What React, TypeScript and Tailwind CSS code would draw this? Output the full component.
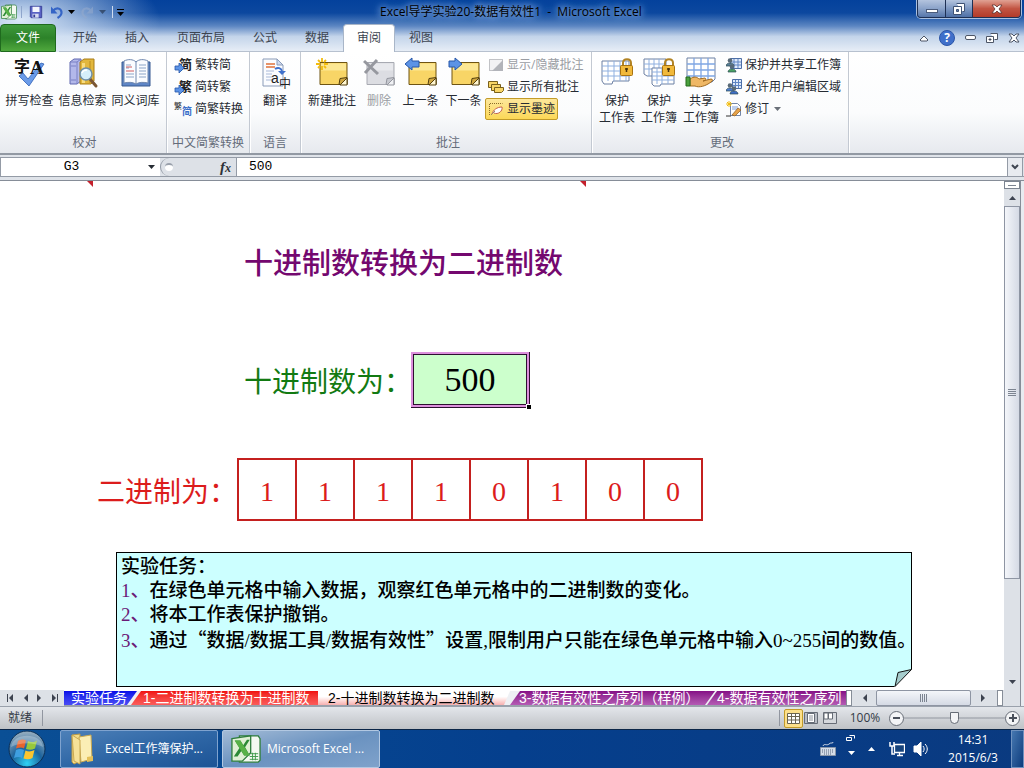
import type { ReactNode } from "react";

const UI_FONT = "font-['Open_Sans','Noto_Sans_CJK_SC',sans-serif]";
const SONG_FONT = "font-['Liberation_Serif','Noto_Sans_CJK_SC',serif]";

/* ---------- small drawings ---------- */

function ExcelLogo({ className }: { className: string }) {
  return (
    <svg viewBox="0 0 32 32" className={className}>
      <path d="M9 2h20l2 3v23l-2 2H9z" fill="#f4f9f1" stroke="#2e7d3c" strokeWidth="1.4" />
      <path d="M20 21h9M20 24h9M20 27h9M23 20v8M26 20v8" stroke="#3f9a4b" strokeWidth="1" />
      <path d="M1 5l20-3v18l-9 9H1z" fill="#dff0d4" stroke="#2e7d3c" strokeWidth="1.4" />
      <path d="M4 7h6l3 5 4-6h3l-5 8 5 9h-6l-3-5-4 6H3l6-9z" fill="#2c8a36" />
      <path d="M4 7h6l10 16h-6z" fill="#57b146" />
    </svg>
  );
}

function SaveIcon() {
  return (
    <svg viewBox="0 0 16 16" className="size-3.5">
      <path d="M1.500 1.500h13v13h-12l-1-1z" fill="#5a62c4" stroke="#343b94" />
      <rect x="4" y="2" width="8" height="6" fill="#f3f5fd" />
      <rect x="4" y="10" width="7" height="4.500" fill="#d5daf0" />
      <rect x="5" y="11" width="2" height="3" fill="#343b94" />
    </svg>
  );
}

function UndoIcon({ redo = false }: { redo?: boolean }) {
  return (
    <svg viewBox="0 0 16 16" className="size-4">
      <g transform={redo ? "translate(16 0) scale(-1 1)" : undefined}>
        <path
          d="M4 7c3-4 8-3 8.500 1 .3 2.500-1.500 4.500-4 6"
          fill="none"
          stroke={redo ? "#93a9cc" : "#3565c6"}
          strokeWidth="2.200"
        />
        <path d="M2 2.500v7h6.500z" fill={redo ? "#93a9cc" : "#3565c6"} />
      </g>
    </svg>
  );
}

function SpellIcon() {
  return (
    <svg viewBox="0 0 32 32" className="size-8 overflow-visible">
      <path d="M5 19l4-3 5 6L27 6l3 1-15 22z" fill="#6b9be8" stroke="#2f5fb5" strokeWidth="0.800" />
      <text x="0" y="15" fontSize="16" fontWeight="700" fontFamily="Noto Sans CJK SC" fill="#111">字</text>
      <text x="16" y="17" fontSize="19" fontWeight="700" fontFamily="Liberation Serif" fill="#111">A</text>
    </svg>
  );
}

function ResearchIcon() {
  return (
    <svg viewBox="0 0 32 32" className="size-8">
      <path d="M3 5l4-3h7v22l-4 3H3z" fill="#b3b8ea" stroke="#6068b0" />
      <path d="M3 5h7v22M10 5l4-3M4 9h5M4 23h5" fill="none" stroke="#7a80c4" />
      <path d="M13 5l4-3h10v22l-3 3H13z" fill="#e2b73d" stroke="#a87c18" />
      <path d="M15 6h3v20h-3z" fill="#f8dc80" />
      <path d="M23 4v22" stroke="#b88b20" />
      <path d="M23 22l6 7" stroke="#7b5735" strokeWidth="3" strokeLinecap="round" />
      <circle cx="19" cy="17" r="6" fill="#d6effa" stroke="#6f8ea6" strokeWidth="1.500" />
      <path d="M15 16c1-3 4-3 5-3" fill="none" stroke="#fff" strokeWidth="1.500" />
    </svg>
  );
}

function ThesaurusIcon() {
  return (
    <svg viewBox="0 0 32 32" className="size-8">
      <path d="M2 5h28v24H2z" fill="#5f86c7" stroke="#36588f" />
      <path d="M4 4c4-2 9-2 12 1 3-3 8-3 12-1v22c-4-1-9-1-12 1-3-2-8-2-12-1z" fill="#fbfcff" stroke="#6f87ae" />
      <path d="M16 5v22" stroke="#6f87ae" />
      <path d="M6 8h5M6 11h3M6 17h8M6 20h8M19 8h7M19 11h7M19 14h7M19 17h7M19 20h7" stroke="#8ca3c8" strokeWidth="1.200" />
      <path d="M6 10h6M6 14h8" stroke="#cf5a60" strokeWidth="1.200" />
    </svg>
  );
}

function TranslateIcon() {
  return (
    <svg viewBox="0 0 32 32" className="size-8 overflow-visible">
      <path d="M4 2h14l6 6v21H4z" fill="#fbfcff" stroke="#8a9bb8" />
      <path d="M18 2v6h6z" fill="#cfdaf0" stroke="#8a9bb8" />
      <path d="M7 7h9M7 10h9" stroke="#e0703a" strokeWidth="1.500" />
      <path d="M7 14h8M7 17h6M7 20h6M7 23h6" stroke="#a9b9d8" />
      <path d="M16 12c3-2 6-1 7 2" fill="none" stroke="#3f70cc" strokeWidth="2" />
      <path d="M19 14h8l-4 4z" fill="#3f70cc" />
      <text x="12" y="26" fontSize="14" fontFamily="Liberation Sans" fill="#222">a</text>
      <text x="20" y="31" fontSize="12" fontFamily="Noto Sans CJK SC" fill="#222">中</text>
    </svg>
  );
}

type NoteKind = "new" | "delete" | "prev" | "next";

function NoteIcon({ kind }: { kind: NoteKind }) {
  const off = kind === "delete";
  return (
    <svg viewBox="0 0 32 32" className="size-8">
      <path d="M4 5.500h27v22H4z" fill={off ? "#dcdde2" : "#f8d566"} stroke={off ? "#a8aab2" : "#6e5413"} />
      <path d="M5 6.500h25v7H5z" fill={off ? "#e8e9ed" : "#fce793"} />
      <path d="M31 20.500l-7 1-1 6h8z" fill={off ? "#c6c8cf" : "#cfa640"} stroke={off ? "#94969e" : "#54400f"} />
      <path d="M31 21v7h-7z" fill={off ? "#f0f1f4" : "#fff6d0"} stroke={off ? "#94969e" : "#54400f"} />
      {kind === "new" && (
        <path
          d="M6 1v4M6 9v4M0 7h4M8 7h4M2 3l2 2M10 3L8 5M2 11l2-2M10 11L8 9"
          stroke="#f2bc10"
          strokeWidth="1.800"
        />
      )}
      {kind === "delete" && <path d="M1 4l14 13M14 3L2 16" stroke="#96989f" strokeWidth="3" />}
      {kind === "prev" && <path d="M0 7l7-6v3h7v6H7v3z" fill="#5c93e6" stroke="#2657a8" />}
      {kind === "next" && <path d="M14 7L7 1v3H1v6h6v3z" fill="#5c93e6" stroke="#2657a8" />}
    </svg>
  );
}

function Lock() {
  return (
    <>
      <path d="M22 10V6c0-5 8-5 8 0v4" fill="none" stroke="#b18324" strokeWidth="2" />
      <rect x="19.500" y="8.500" width="12" height="10" rx="1" fill="#f1b93b" stroke="#a87312" />
      <path d="M25.500 11v4M24 12h3" stroke="#4a3208" strokeWidth="1.500" />
    </>
  );
}

function ProtectSheetIcon() {
  return (
    <svg viewBox="0 0 32 32" className="size-8">
      <path d="M1 4h27v20H12l-1 3H3l-2-3z" fill="#fff" stroke="#6d80a3" />
      <path d="M1 9h27M1 14h27M1 19h27M7 4v20M13 4v20M19 4v20M25 4v20" stroke="#8fb0e0" />
      <Lock />
    </svg>
  );
}

function ProtectBookIcon() {
  return (
    <svg viewBox="0 0 32 32" className="size-8">
      <path d="M1 2h22v17H4l-3-2z" fill="#fff" stroke="#6d80a3" />
      <path d="M1 7h22M1 12h22M6 2v17M11 2v17M16 2v17" stroke="#8fb0e0" />
      <path d="M9 11h22v16H18l-1 2h-6l-2-2z" fill="#fff" stroke="#6d80a3" />
      <path d="M9 15h22M9 19h22M9 23h22M14 11v16M19 11v16M25 11v16" stroke="#8fb0e0" />
      <Lock />
    </svg>
  );
}

function ShareBookIcon() {
  return (
    <svg viewBox="0 0 32 32" className="size-8">
      <path d="M2 1h28v21l-3 3H2z" fill="#fff" stroke="#6d80a3" />
      <path d="M2 7h28M2 13h28M2 19h28M9 1v23M16 1v23M23 1v23" stroke="#7fa6e4" strokeWidth="1.300" />
      <path d="M5 22c4-3 7-2 9 0l6-1c2 1 0 3-2 3l8-2c2 0 2 2 0 3-5 4-12 6-16 4H5z" fill="#efb765" stroke="#a06a20" />
      <path d="M1 20h4v9H1z" fill="#4aa13e" stroke="#256b1d" />
    </svg>
  );
}

function ConvertIcon({ from, to }: { from: string; to?: string }) {
  return (
    <svg viewBox="0 0 16 16" className="size-4 overflow-visible">
      {to ? (
        <>
          <text x="-2" y="8" fontSize="8" fontFamily="Noto Sans CJK SC" fill="#222">{from}</text>
          <text x="6" y="14" fontSize="10" fontWeight="700" fontFamily="Noto Sans CJK SC" fill="#3a6fc9">{to}</text>
        </>
      ) : (
        <>
          <text x="3" y="12" fontSize="13" fontWeight="700" fontFamily="Noto Sans CJK SC" fill="#222">{from}</text>
          <path d="M-1 9h4V6l5 5-5 5v-3h-4z" fill="#5c93e6" stroke="#2657a8" strokeWidth="0.800" />
        </>
      )}
    </svg>
  );
}

function ShowHideIcon() {
  return (
    <svg viewBox="0 0 16 16" className="size-4">
      <path d="M1.500 2.500h13v11h-13z" fill="#f2f2f4" stroke="#8b8d93" strokeDasharray="1 1" />
      <path d="M15 3v11H4z" fill="#b2b4ba" />
    </svg>
  );
}

function ShowAllIcon() {
  return (
    <svg viewBox="0 0 16 16" className="size-4" fill="#f8d566" stroke="#79601c">
      <path d="M.5 2.500h9v6h-9z" />
      <path d="M3.500 5.500h9v6h-9z" />
      <path d="M6.500 8.500h9v3l-2 2h-7z" />
    </svg>
  );
}

function InkIcon() {
  return (
    <svg viewBox="0 0 16 16" className="size-4">
      <path d="M1.500 14V2.500h13" fill="none" stroke="#8a6d2a" strokeDasharray="1 1" />
      <path d="M4 13c1-4 5-7 10-7 1 4-4 8-8 6" fill="#fff" stroke="#c4604c" />
      <path d="M3 14l4-4" stroke="#9a8a6a" />
    </svg>
  );
}

function Person({ x, y, color }: { x: number; y: number; color: string }) {
  return (
    <g transform={`translate(${x} ${y})`}>
      <path d="M0 8c0-4 8-4 8 0z" fill={color} stroke="#2c4a55" strokeWidth="0.700" />
      <circle cx="4" cy="2.500" r="2.300" fill="#596a78" />
    </g>
  );
}

function GridPeopleIcon({ pair = false }: { pair?: boolean }) {
  return (
    <svg viewBox="0 0 16 16" className="size-4">
      <path d={pair ? "M6.500.5h9v9h-9z" : "M4.500 1.500h11v10h-11z"} fill="#dfeafa" stroke="#4d6fa6" />
      <path
        d={pair ? "M7 3.500h8M7 6.500h8M9.500 1v8M12.500 1v8" : "M5 5h10M5 8h10M8 2v9M12 2v9"}
        stroke="#5e85c4"
      />
      {pair ? <Person x={0} y={4} color="#4e7ed0" /> : <Person x={0} y={1} color="#5a7f96" />}
      <Person x={pair ? 4 : 2} y={7} color={pair ? "#3f6fc8" : "#49a263"} />
    </svg>
  );
}

function TrackIcon() {
  return (
    <svg viewBox="0 0 16 16" className="size-4">
      <path d="M4.500 2.500h7l3 3v9h-10z" fill="#fff" stroke="#7286a8" />
      <path d="M6 6h6M6 8h6" stroke="#7ea0d8" />
      <path d="M6 14l6-7 3 2-6 6z" fill="#e7a34a" stroke="#8d5a1b" strokeWidth="0.700" />
      <path d="M3 0v6M0 3h6M1 1l4 4M5 1L1 5" stroke="#f2bc10" />
      <path d="M0 15h5" stroke="#333" />
    </svg>
  );
}

function Caret({ className = "" }: { className?: string }) {
  return (
    <svg viewBox="0 0 7 4" className={`h-1 w-[7px] ${className}`}>
      <path d="M0 0h7L3.500 4z" fill="currentColor" />
    </svg>
  );
}

function SideArrow({ left = false, bar = false }: { left?: boolean; bar?: boolean }) {
  return (
    <svg viewBox="0 0 8 8" className="size-2" fill="#3d4350">
      <g transform={left ? "translate(8 0) scale(-1 1)" : undefined}>
        <path d="M1 0l4 4-4 4z" />
        {bar && <path d="M6 0h1v8H6z" />}
      </g>
    </svg>
  );
}

/* ---------- title bar and ribbon ---------- */

function TitleBar() {
  return (
    <header className="flex h-6 items-start">
      <div className="flex h-6 flex-1 items-center pl-px text-black">
        <ExcelLogo className="size-4" />
        <span className="mx-1 h-3 w-px bg-[#8fa6cc]" />
        <button aria-label="保存" className="ml-[3px]"><SaveIcon /></button>
        <button aria-label="撤销" className="ml-1.5"><UndoIcon /></button>
        <Caret className="ml-[3px]" />
        <button aria-label="恢复" className="ml-1 opacity-60"><UndoIcon redo /></button>
        <Caret className="ml-1 opacity-40" />
        <span className="ml-1.5 h-3 w-px bg-[#cfdcf0]" />
        <button aria-label="自定义快速访问工具栏" className="ml-1 border-t border-black pt-0.5"><Caret /></button>
      </div>
      <h1 className="h-6 text-[12px] leading-6 whitespace-pre text-black [text-shadow:0_0_6px_#a9c8f4,0_0_10px_#a9c8f4]">
        Excel导学实验20-数据有效性1  -  Microsoft Excel
      </h1>
      <div className="flex flex-1 justify-end pr-[3px]">
        <div className="flex h-[18px] overflow-hidden rounded-b border border-t-0 border-[#1e3054] shadow-[0_0_0_1px_#a9bfdf]">
          <button aria-label="最小化" className="flex w-7 items-center justify-center border-r border-[#1e3054] bg-linear-to-b from-[#b4c4de] via-[#8ba3c9] via-50% to-[#5676aa]">
            <span className="mt-1 h-1 w-3 border border-[#4b5c7c] bg-white" />
          </button>
          <button aria-label="还原" className="flex w-[27px] items-center justify-center border-r border-[#1e3054] bg-linear-to-b from-[#b4c4de] via-[#7e98c2] via-50% to-[#4f70a6]">
            <svg viewBox="0 0 12 12" className="size-3">
              <path d="M3.500.5h8v8h-2M.5 3.500h8v8h-8z" fill="#fff" stroke="#3f5274" />
              <path d="M3.500 6.500h2v2h-2z" fill="#6682b2" stroke="#3f5274" />
            </svg>
          </button>
          <button aria-label="关闭" className="flex w-[47px] items-center justify-center bg-linear-to-b from-[#e0a294] via-[#c25543] via-50% to-[#b33a28]">
            <svg viewBox="0 0 12 10" className="h-2.5 w-3">
              <path d="M1 1h3l2 2 2-2h3L8 5l3 4H8L6 7 4 9H1l3-4z" fill="#fff" stroke="#5b3330" strokeWidth="0.800" />
            </svg>
          </button>
        </div>
      </div>
    </header>
  );
}

const ribbonTabs = ["开始", "插入", "页面布局", "公式", "数据", "审阅", "视图"];

function RibbonTabs() {
  return (
    <nav className="flex h-7 items-stretch text-[12px] text-[#3c4450]">
      <button className="mr-[3px] w-14 rounded-t border border-[#1f6a1e] bg-linear-to-b from-[#3f9a3c] via-[#2c8229] to-[#4fa83d] text-white">
        文件
      </button>
      {ribbonTabs.map((tab) => (
        <button
          key={tab}
          className={
            tab === "审阅"
              ? "rounded-t border border-b-0 border-[#a9b6c8] bg-white px-[13px] pb-0.5"
              : "border-b border-[#b7c1cf] px-3.5"
          }
        >
          {tab}
        </button>
      ))}
      <div className="flex flex-1 items-center justify-end gap-2.5 border-b border-[#b7c1cf] pr-1 text-[#4c5566]">
        <button aria-label="功能区最小化">
          <svg viewBox="0 0 10 8" className="h-2 w-2.5">
            <path d="M1 6l4-4 4 4-1 1H2z" fill="#fff" stroke="currentColor" />
          </svg>
        </button>
        <button aria-label="帮助" className="size-4 rounded-full border border-[#2b55a8] bg-[#3f6fca] text-[12px] leading-3.5 font-bold text-white">
          ?
        </button>
        <button aria-label="最小化窗口" className="h-[5px] w-[11px] rounded-xs border border-current bg-white" />
        <button aria-label="还原窗口">
          <svg viewBox="0 0 12 12" className="size-3">
            <path d="M4.500 1.500h7v6h-3M.5 4.500h7v6h-7z" fill="#fff" stroke="currentColor" />
            <path d="M3 7h2v1H3z" stroke="currentColor" />
          </svg>
        </button>
        <button aria-label="关闭窗口">
          <svg viewBox="0 0 12 10" className="h-2.5 w-3">
            <path d="M1 1h3l2 2 2-2h3L8 5l3 4H8L6 7 4 9H1l3-4z" fill="#fff" stroke="currentColor" />
          </svg>
        </button>
      </div>
    </nav>
  );
}

function Group({ title, className = "", children }: { title: string; className?: string; children: ReactNode }) {
  return (
    <section className={`flex shrink-0 flex-col border-r border-[#c3c9d2] shadow-[1px_0_0_#fff] ${className}`}>
      <div className="flex flex-1">{children}</div>
      <h2 className="h-5 text-center leading-5 text-[#646c7a]">{title}</h2>
    </section>
  );
}

function BigButton({ icon, className, disabled, children }: { icon: ReactNode; className: string; disabled?: boolean; children: ReactNode }) {
  return (
    <button
      disabled={disabled}
      className={`flex flex-col items-center pt-[5px] leading-[17px] whitespace-nowrap disabled:text-[#9a9da3] ${className}`}
    >
      {icon}
      <span className="mt-[3px]">{children}</span>
    </button>
  );
}

function SmallButton({ icon, active, disabled, children }: { icon: ReactNode; active?: boolean; disabled?: boolean; children: ReactNode }) {
  return (
    <button
      disabled={disabled}
      className={`flex h-[22px] items-center gap-[3px] rounded-xs border px-0.5 whitespace-nowrap disabled:text-[#9a9da3] ${
        active ? "border-[#c29b29] bg-linear-to-b from-[#fde79a] to-[#fcd855]" : "border-transparent"
      }`}
    >
      {icon}
      {children}
    </button>
  );
}

function Ribbon() {
  return (
    <div className="flex h-[103px] border-b-2 border-[#9299a3] bg-linear-to-b from-white via-[#fbfcfd] via-60% to-[#e6e9ee] text-[12px] text-[#262b33]">
      <Group title="校对" className="w-[167px] pl-[3px]">
        <BigButton className="w-[53px]" icon={<SpellIcon />}>拼写检查</BigButton>
        <BigButton className="w-[53px]" icon={<ResearchIcon />}>信息检索</BigButton>
        <BigButton className="w-[53px]" icon={<ThesaurusIcon />}>同义词库</BigButton>
      </Group>
      <Group title="中文简繁转换" className="w-[83px]">
        <div className="flex flex-col items-start pt-0.5 pl-1.5">
          <SmallButton icon={<ConvertIcon from="简" />}>繁转简</SmallButton>
          <SmallButton icon={<ConvertIcon from="繁" />}>简转繁</SmallButton>
          <SmallButton icon={<ConvertIcon from="繁" to="简" />}>简繁转换</SmallButton>
        </div>
      </Group>
      <Group title="语言" className="w-[51px]">
        <BigButton className="w-full" icon={<TranslateIcon />}>翻译</BigButton>
      </Group>
      <Group title="批注" className="w-[291px] pl-1">
        <BigButton className="w-[54px]" icon={<NoteIcon kind="new" />}>新建批注</BigButton>
        <BigButton className="w-10" disabled icon={<NoteIcon kind="delete" />}>删除</BigButton>
        <BigButton className="w-[43px]" icon={<NoteIcon kind="prev" />}>上一条</BigButton>
        <BigButton className="w-[43px]" icon={<NoteIcon kind="next" />}>下一条</BigButton>
        <div className="flex flex-col items-start pt-0.5">
          <SmallButton disabled icon={<ShowHideIcon />}>显示/隐藏批注</SmallButton>
          <SmallButton icon={<ShowAllIcon />}>显示所有批注</SmallButton>
          <SmallButton active icon={<InkIcon />}>显示墨迹</SmallButton>
        </div>
      </Group>
      <Group title="更改" className="w-[257px] pl-1">
        <BigButton className="w-[42px]" icon={<ProtectSheetIcon />}>保护<br />工作表</BigButton>
        <BigButton className="w-[42px]" icon={<ProtectBookIcon />}>保护<br />工作簿</BigButton>
        <BigButton className="w-[42px]" icon={<ShareBookIcon />}>共享<br />工作簿</BigButton>
        <div className="flex flex-col items-start pt-0.5 pl-px">
          <SmallButton icon={<GridPeopleIcon />}>保护并共享工作簿</SmallButton>
          <SmallButton icon={<GridPeopleIcon pair />}>允许用户编辑区域</SmallButton>
          <SmallButton icon={<TrackIcon />}>修订<Caret className="ml-0.5 text-[#6a7079]" /></SmallButton>
        </div>
      </Group>
    </div>
  );
}

function FormulaBar() {
  return (
    <div className="border-b border-[#868d98] bg-[#dfe3e9] pt-0.5 pb-[3px]">
      <div className="flex h-5 items-stretch border-y border-[#949ba6] bg-[#dfe3e9] font-['Liberation_Mono',monospace] text-[13px] text-black">
        <input
          aria-label="名称框"
          defaultValue="G3"
          className="w-[142px] border-l border-[#949ba6] bg-white text-center outline-none"
        />
        <button aria-label="名称框下拉" className="flex w-[18px] items-center justify-center bg-white text-[#262b33]">
          <Caret />
        </button>
        <div className="flex w-[77px] items-center justify-between rounded-l-full border-x border-[#949ba6] bg-[#dde1e7] pr-[5px] pl-1">
          <span className="size-2 rounded-full border-t-2 border-[#9aa1ac] bg-white" />
          <button aria-label="插入函数" className="font-['Liberation_Serif',serif] text-[15px] font-bold italic text-[#2c3138]">
            f<span className="text-[12px]">x</span>
          </button>
        </div>
        <input aria-label="编辑栏" defaultValue="500" className="min-w-0 flex-1 bg-white pl-3 outline-none" />
        <button aria-label="展开编辑栏" className="mr-px flex w-4 items-center justify-center border-x border-[#949ba6] bg-[#e8ebf0]">
          <svg viewBox="0 0 8 6" className="h-1.5 w-2">
            <path d="M1 1l3 3 3-3" fill="none" stroke="#3f4652" strokeWidth="2" />
          </svg>
        </button>
      </div>
    </div>
  );
}

/* ---------- worksheet ---------- */

const bits = [1, 1, 1, 1, 0, 1, 0, 0];

function CommentMark({ className }: { className: string }) {
  return <span className={`absolute top-0 size-1.5 bg-[#c4202c] [clip-path:polygon(0_0,100%_0,100%_100%)] ${className}`} />;
}

function TaskNote() {
  return (
    <aside className="relative mt-[31px] mb-[3px] ml-[116px] h-[135px] w-[796px] border border-black bg-[#ccffff] pt-0.5 pl-1 text-[19px] leading-6 font-medium whitespace-nowrap text-black">
      <p>实验任务：</p>
      <ol>
        <li><span className="text-[#6b1a78]">1、</span>在绿色单元格中输入数据，观察红色单元格中的二进制数的变化。</li>
        <li><span className="text-[#6b1a78]">2、</span>将本工作表保护撤销。</li>
        <li>
          <span className="text-[#6b1a78]">3、</span>
          通过<span className="font-['Noto_Sans_CJK_SC',sans-serif]">“</span>数据/数据工具/数据有效性
          <span className="font-['Noto_Sans_CJK_SC',sans-serif]">”</span>设置,限制用户只能在绿色单元格中输入0~255间的数值。
        </li>
      </ol>
      <svg viewBox="0 0 18 18" className="absolute -right-px -bottom-px size-[18px]">
        <path d="M18 0v18H0z" fill="#fff" />
        <path d="M17.500.5L4 3.500 1 17.500z" fill="#a5cccc" stroke="#111" />
      </svg>
    </aside>
  );
}

function Worksheet() {
  return (
    <main lang="zh-CN" className={`relative min-w-0 flex-1 overflow-hidden bg-white ${SONG_FONT}`}>
      <CommentMark className="left-[87px]" />
      <CommentMark className="left-[580px]" />
      <h2 className="mt-[63px] ml-[244px] text-[29px] leading-10 font-medium whitespace-nowrap text-[#74086f]">
        十进制数转换为二进制数
      </h2>
      <div className="mt-[68px] ml-[244px] flex h-14 items-center text-[28px] whitespace-nowrap text-[#127a12]">
        <label htmlFor="decimal" className="w-[167px] pt-1.5">十进制数为：</label>
        <div className="relative h-14 w-[119px] border border-t-0 border-l-0 border-[#2c1030]">
          <input
            id="decimal"
            defaultValue="500"
            className="size-full border-2 border-[#dd90dd] bg-[#ccffcc] text-center text-[34px] text-black shadow-[inset_0_0_0_1px_#2c1030] outline-none"
          />
          <span className="absolute -right-0.5 -bottom-0.5 size-[5px] border-t border-l border-white bg-black" />
        </div>
      </div>
      <div className="mt-[50px] ml-[97px] flex items-center text-[28px] whitespace-nowrap text-[#dc1c1c]">
        <span id="binary-label" className="w-[140px] pt-1.5">二进制为：</span>
        <table aria-labelledby="binary-label" className="border-collapse">
          <tbody>
            <tr>
              {bits.map((bit, i) => (
                <td key={i} className="h-[61px] w-[58px] border-2 border-[#c4201f] pt-1 text-center leading-8">
                  {bit}
                </td>
              ))}
            </tr>
          </tbody>
        </table>
      </div>
      <TaskNote />
    </main>
  );
}

function VerticalScroll() {
  return (
    <div className="flex w-5 shrink-0 bg-[#e8ebf0]">
      <div className="flex w-[17px] flex-col border-r border-[#868d98] bg-[#dde1e7]">
        <div className="flex h-2 items-center justify-center border border-[#7c8491] bg-white">
          <span className="h-px w-2 bg-[#7c8491]" />
        </div>
        <button aria-label="向上滚动" className="flex h-[17px] items-center justify-center text-[#3d4350]">
          <Caret className="rotate-180" />
        </button>
        <div className="flex flex-[372] flex-col items-center justify-center gap-px border border-[#8e95a3] bg-linear-to-r from-[#f4f6fa] to-[#d5dae5]">
          {[0, 1, 2, 3].map((n) => (
            <span key={n} className="h-px w-2 bg-[#7c8491]" />
          ))}
        </div>
        <div className="flex-[94]" />
        <button aria-label="向下滚动" className="flex h-[17px] items-center justify-center text-[#3d4350]">
          <Caret />
        </button>
      </div>
    </div>
  );
}

const sheetTabs = [
  {
    name: "实验任务",
    style: "w-[73px] bg-linear-to-b from-[#0808e8] to-[#4a4af4] text-left pl-[7px] text-white [clip-path:polygon(0_0,100%_0,calc(100%-10px)_100%,0_100%)]",
  },
  {
    name: "1-二进制数转换为十进制数",
    style: "-ml-1.5 w-[187px] bg-linear-to-b from-[#f00c0c] to-[#fb5a5a] pl-3 text-white [clip-path:polygon(10px_0,100%_0,100%_100%,0_100%)]",
  },
  {
    name: "2-十进制数转换为二进制数",
    style: "w-[192px] bg-linear-to-b from-white from-40% to-[#f6b0b0] pl-2.5 text-black [clip-path:polygon(0_0,100%_0,calc(100%-6px)_100%,0_100%)]",
  },
  {
    name: "3-数据有效性之序列（样例）",
    style: "w-[205px] bg-linear-to-b from-[#860c86] to-[#b45ab4] pl-[9px] text-white [clip-path:polygon(10px_0,100%_0,calc(100%-10px)_100%,0_100%)]",
  },
  {
    name: "4-数据有效性之序列",
    style: "-ml-2 min-w-0 flex-1 bg-linear-to-b from-[#860c86] to-[#b45ab4] pl-2.5 text-white [clip-path:polygon(10px_0,100%_0,100%_100%,0_100%)]",
  },
];

function SheetTabs() {
  return (
    <div className="flex h-4 shrink-0 items-stretch bg-[#dde1e7]">
      <div className="flex w-16 items-center justify-around px-0.5">
        <button aria-label="第一张"><SideArrow left bar /></button>
        <button aria-label="上一张"><SideArrow left /></button>
        <button aria-label="下一张"><SideArrow /></button>
        <button aria-label="最后一张"><SideArrow bar /></button>
      </div>
      <div className="flex min-w-0 flex-1 overflow-hidden border-t border-b border-white border-b-[#9aa1ac] bg-[#eef0f4] font-['Liberation_Sans','Noto_Sans_CJK_SC',sans-serif] text-[14px] leading-3.5">
        {sheetTabs.map((tab) => (
          <button key={tab.name} className={`shrink-0 overflow-hidden text-left whitespace-nowrap ${tab.style}`}>
            {tab.name}
          </button>
        ))}
      </div>
      <span className="w-1.5 border border-[#868d98] bg-white" />
      <div className="flex w-[145px] items-stretch">
        <button aria-label="向左滚动" className="flex w-6 items-center justify-center"><SideArrow left /></button>
        <div className="flex w-[95px] items-center justify-center gap-px rounded-xs border border-[#8e95a3] bg-linear-to-b from-[#f4f6fa] to-[#d5dae5]">
          {[0, 1, 2, 3].map((n) => (
            <span key={n} className="h-2 w-px bg-[#7c8491]" />
          ))}
        </div>
        <button aria-label="向右滚动" className="flex flex-1 items-center justify-center"><SideArrow /></button>
      </div>
      <span className="w-1.5 border border-[#868d98] bg-white" />
      <span className="ml-px w-[17px] border-r border-[#868d98]" />
      <span className="w-[3px] bg-[#e8ebf0]" />
    </div>
  );
}

function StatusBar() {
  return (
    <div className="flex h-[23px] shrink-0 items-center border-t border-[#9aa1ac] bg-linear-to-b from-[#e3e6eb] to-[#bfc2c6] text-[12px] text-[#343b46]">
      <span className="pr-2.5 pl-2">就绪</span>
      <span className="h-4 w-px bg-[#9196a0]" />
      <div className="ml-auto flex items-center">
        <span className="mr-1 h-4 w-px bg-[#9196a0]" />
        <button aria-label="普通" className="flex size-[19px] items-center justify-center rounded-xs border border-[#c29b29] bg-[#fde08a]">
          <svg viewBox="0 0 13 11" className="h-[11px] w-[13px]">
            <path d="M.5.5h12v10H.5zM.5 3.500h12M.5 7h12M4.500.5v10M8.500.5v10" fill="#fff" stroke="#6a6450" />
          </svg>
        </button>
        <button aria-label="页面布局" className="ml-px">
          <svg viewBox="0 0 14 12" className="h-3 w-3.5">
            <path d="M.5.5h13v11H.5z" fill="#b9bdc4" stroke="#666c76" />
            <path d="M3.500 1.500h7v9h-7z" fill="#fff" stroke="#666c76" />
            <path d="M5 4h4M5 6h4M5 8h4" stroke="#8d929b" />
          </svg>
        </button>
        <button aria-label="分页预览" className="ml-[5px]">
          <svg viewBox="0 0 14 12" className="h-3 w-3.5">
            <path d="M.5.5h13v11H.5z" fill="#d5d8dd" stroke="#666c76" />
            <path d="M1 1h4v6H1zM5.500 1h4v6h-4z" fill="#fff" stroke="#666c76" />
          </svg>
        </button>
        <button className="ml-3 w-8">100%</button>
        <button aria-label="缩小" className="ml-2 flex size-[15px] items-center justify-center rounded-full border border-[#666c76] bg-[#f3f4f6]">
          <span className="h-0.5 w-[7px] bg-[#4a505b]" />
        </button>
        <input
          type="range"
          aria-label="显示比例"
          min={0}
          max={100}
          defaultValue={50}
          className="h-4 w-[101px] appearance-none bg-linear-to-b from-transparent from-45% via-[#7c828d] via-50% to-transparent to-55% [&::-webkit-slider-thumb]:h-3 [&::-webkit-slider-thumb]:w-[9px] [&::-webkit-slider-thumb]:appearance-none [&::-webkit-slider-thumb]:rounded-b-full [&::-webkit-slider-thumb]:border [&::-webkit-slider-thumb]:border-[#666c76] [&::-webkit-slider-thumb]:bg-[#f3f4f6]"
        />
        <button aria-label="放大" className="mr-1 flex size-[15px] items-center justify-center rounded-full border border-[#666c76] bg-[#f3f4f6]">
          <svg viewBox="0 0 8 8" className="size-2">
            <path d="M4 0v8M0 4h8" stroke="#4a505b" strokeWidth="2" />
          </svg>
        </button>
      </div>
    </div>
  );
}

/* ---------- Windows taskbar ---------- */

function StartOrb() {
  return (
    <svg viewBox="0 0 38 38" className="size-[38px]">
      <defs>
        <radialGradient id="orb" cx="50%" cy="90%" r="85%">
          <stop offset="0" stopColor="#2fd2f5" />
          <stop offset="0.500" stopColor="#1c639c" />
          <stop offset="1" stopColor="#8fa9bd" />
        </radialGradient>
      </defs>
      <circle cx="19" cy="19" r="18" fill="url(#orb)" stroke="#0b2f55" />
      <path d="M10 11c3-2 6-2 8-.5l-2 8c-2-1.500-5-1.500-8 0z" fill="#e8642c" />
      <path d="M20 11c3 1.500 6 1.500 9-.5l-2 8c-3 1.500-6 1.500-9 .5z" fill="#97c83c" />
      <path d="M8 20c3-1.500 5-1.500 8 0l-2 8c-2-1.500-5-1.500-8 0z" fill="#3f9fe0" />
      <path d="M17.500 20.500c3 1.500 6 1 9-.5l-2 8c-3 1.500-6 1.500-9 .5z" fill="#fcc52e" />
      <path d="M3 17C5 2 33 2 35 17c-10-5-22-5-32 0z" fill="#fff" opacity="0.250" />
    </svg>
  );
}

function FolderIcon() {
  return (
    <svg viewBox="0 0 32 32" className="size-8">
      <path d="M5 2l8-1v27l-6 3-2-2z" fill="#f3dc88" stroke="#bd9a45" />
      <path d="M12 4l12-2 1 24-11 3z" fill="#fbeeb5" stroke="#c9a850" />
      <path d="M5 2l8 5v24l-6-3z" fill="#f6e198" stroke="#c9a850" />
      <path d="M20 24l6-1v5l-6 1z" fill="#e4c05a" />
    </svg>
  );
}

function Taskbar() {
  return (
    <footer className="flex h-[39px] shrink-0 items-stretch border-t border-[#0a2547] bg-linear-to-r from-[#0a4f95] via-[#053f8d] to-[#0a3a80] text-[12px] text-white">
      <button aria-label="开始" className="ml-2 w-[38px] overflow-hidden"><StartOrb /></button>
      <button className="ml-3.5 flex w-[158px] items-center rounded-xs border border-[#7fa3cf] bg-linear-to-br from-[#4d80b8] via-[#2f67a6] to-[#1d5496] pl-1.5">
        <FolderIcon />
        <span className="ml-1.5 whitespace-nowrap">Excel工作簿保护...</span>
      </button>
      <button className="ml-1 flex w-[158px] items-center rounded-xs border border-[#b2c8e2] bg-linear-to-br from-[#a3bbd6] via-[#6a92c0] to-[#7fa2cb] pl-2">
        <ExcelLogo className="size-[30px]" />
        <span className="ml-1.5 whitespace-nowrap">Microsoft Excel ...</span>
      </button>
      <div className="ml-auto flex items-center">
        <svg viewBox="0 0 16 14" className="h-3.5 w-4">
          <path d="M3 4c1-3 4 0 6-2s4 0 4-2" fill="none" stroke="#d5dde8" />
          <path d="M.5 5.500h15v8H.5z" fill="#d5dde8" stroke="#8997aa" />
          <path d="M2 8h12M2 10h12M4 12h8" stroke="#55657d" strokeDasharray="1 1" />
        </svg>
        <div className="mr-3 ml-2.5 flex w-2.5 flex-col items-center gap-2 pb-2">
          <svg viewBox="0 0 10 8" className="h-2 w-2.5">
            <path d="M3.500.5h5v3M.5 2.500h5v3h-5z" fill="none" stroke="#fff" />
          </svg>
          <Caret />
        </div>
        <button aria-label="显示隐藏的图标"><Caret className="rotate-180" /></button>
        <svg viewBox="0 0 16 16" className="ml-3.5 size-4" fill="none" stroke="#fff">
          <path d="M5.500 3.500h10v8h-10zM8 14.500h6M10.500 12v2" fill="#16437c" strokeWidth="1.300" />
          <path d="M1 1v4h4V1M3 5v8h3" strokeWidth="1.500" />
        </svg>
        <svg viewBox="0 0 16 16" className="ml-2 size-4" fill="none" stroke="#fff">
          <path d="M1 5h3l4-4v14l-4-4H1z" fill="#fff" />
          <path d="M10 5c1.500 2 1.500 4 0 6M12 3c3 3 3 7 0 10" />
        </svg>
        <time className="ml-3.5 w-[60px] text-center leading-[18px]">
          14:31
          <br />
          2015/6/3
        </time>
      </div>
      <button aria-label="显示桌面" className="ml-2 w-[13px] border border-[#6f92bf] bg-linear-to-br from-[#4577b0] to-[#0c3c7d]" />
    </footer>
  );
}

export default function App() {
  return (
    <div className={`flex min-h-screen flex-col overflow-hidden ${UI_FONT}`}>
      <div className="bg-[radial-gradient(ellipse_140px_60px_at_20px_20px,#dbe8f8,transparent),linear-gradient(to_bottom,#04419c_0,#0c489f_25%,#5c86c2_50%,#c3d4ea_70%,#e9eff7_100%)]">
        <TitleBar />
        <RibbonTabs />
      </div>
      <Ribbon />
      <FormulaBar />
      <div className="flex flex-1">
        <Worksheet />
        <VerticalScroll />
      </div>
      <SheetTabs />
      <StatusBar />
      <Taskbar />
    </div>
  );
}
